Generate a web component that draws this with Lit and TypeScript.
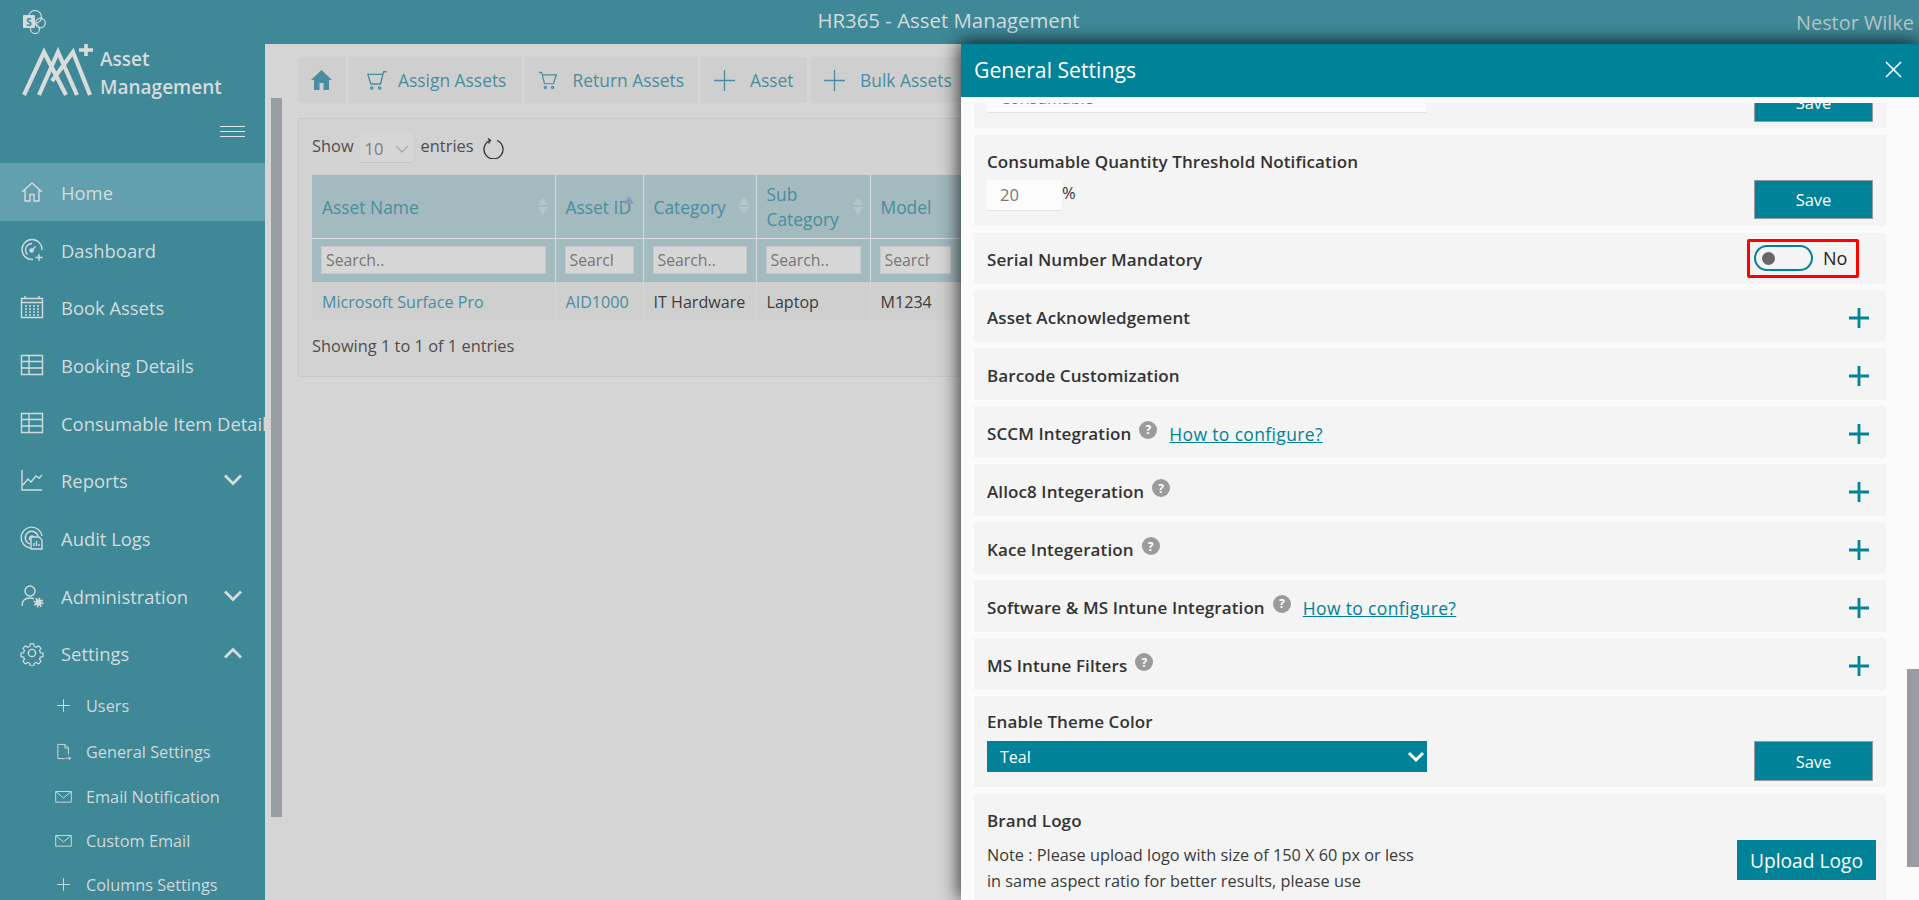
import { LitElement, html, css, svg } from "lit";
import { customElement } from "lit/decorators.js";

const ic = (body: unknown, size = 26, vb = 24) => html`<svg class="ic" width=${size} height=${size} viewBox="0 0 ${vb} ${vb}" fill="none" stroke="currentColor" stroke-width="1.4">${body}</svg>`;

const icons: Record<string, unknown> = {
  home: svg`<path d="M2 12 12 3l10 9M5 10v11h5v-6.5h4V21h5V10"/>`,
  dash: svg`<path d="M13 21.5A10 10 0 1 1 22 12M12 5.5A6.5 6.5 0 0 0 5.5 12c0 2 .8 3.5 2 4.6"/><circle cx="11.5" cy="12.5" r="1.6" fill="currentColor"/><path d="m12 12 3.5-3.5M19 16v7M15.5 19.5h7"/>`,
  cal: svg`<path d="M1.5 3.5h21v19h-21zM1.5 7.5h21M5 1v3M19 1v3"/><path stroke-dasharray="2 2" d="M5 11h14M5 14h14M5 17h14M5 20h14"/>`,
  grid: svg`<path d="M1.5 2.5h21v19h-21zM1.5 8.5h21M1.5 15h21M9 2.500v19"/>`,
  chart: svg`<path d="M2 2v20h20M3 17l5-6 3 3 5-6 3 2 3-3"/>`,
  audit: svg`<path d="M10 22A10.500 10.500 0 1 1 22 10M10 18A6.500 6.500 0 1 1 18 10M10 14a2.500 2.500 0 1 1 4-3"/><path fill="#3e8897" d="M11 11h8l3 3v9H11z"/><path d="M14 20v-3M16.500 20v-5M19 20v-2"/>`,
  admin: svg`<circle cx="10" cy="7" r="5"/><path d="M2 22c0-6 3-8 8-8 1.500 0 3 .3 4 .8"/><circle cx="18.500" cy="18.500" r="2.500" fill="currentColor"/><circle cx="18.500" cy="18.500" r="4" stroke-dasharray="1.600 1.500" stroke-width="2"/>`,
  gear: svg`<circle cx="12" cy="12" r="3.600"/><path d="M10 1.800h4l.6 3 2.300 1 2.600-1.700 2.800 2.900-1.700 2.500 1 2.400 3 .6v4l-3 .6-1 2.300 1.700 2.600-2.800 2.800-2.600-1.700-2.300 1-.6 3h-4l-.6-3-2.300-1-2.600 1.700-2.800-2.800 1.700-2.600-1-2.300-3-.6v-4l3-.6 1-2.400-1.700-2.500 2.800-2.900 2.600 1.700 2.300-1z" transform="translate(1.500 1.200) scale(.875)"/>`,
  plus: svg`<path d="M12 3v18M3 12h18"/>`,
  doc: svg`<path d="M4 22V2h10l5 5v9M14 2v5h5M4 22h10M15 21.500h7M19.500 19l2.500 2.500-2.500 2.500"/>`,
  mail: svg`<path d="M1 5h22v15H1zM1 5l11 9 11-9"/>`,
};

const nav = [
  ["home", "Home"], ["dash", "Dashboard"], ["cal", "Book Assets"], ["grid", "Booking Details"],
  ["grid", "Consumable Item Details"], ["chart", "Reports", "down"], ["audit", "Audit Logs"],
  ["admin", "Administration", "down"], ["gear", "Settings", "up"],
];
const sub = [["plus", "Users", 1], ["doc", "General Settings", 1], ["mail", "Email Notification", 0], ["mail", "Custom Email", 0], ["plus", "Columns Settings", 0]];

const cart = (flip: boolean) => html`<svg class=${flip ? "flip" : ""} width="22" height="21" viewBox="0 0 24 24" fill="none" stroke="#4a8d9e" stroke-width="1.500"><path d="M1 2h3.500L8 16h11l3.500-11H5.500"/><circle cx="9" cy="20.500" r="1.300"/><circle cx="18" cy="20.500" r="1.300"/></svg>`;
const tplus = html`<svg width="21" height="21" viewBox="0 0 21 21" stroke="#4a8d9e" stroke-width="1.300"><path d="M10.500 0v21M0 10.500h21"/></svg>`;

const help = html`<span class="help">?</span>`;
const chev = (up: boolean) => html`<svg class="chev" width="20" height="14" viewBox="0 0 20 14" fill="none" stroke="currentColor" stroke-width="2.800"><path d=${up ? "M2 11.500 10 3.500l8 8" : "M2 2.500l8 8 8-8"}/></svg>`;

const cols = [
  ["Asset Name", 243, "Microsoft Surface Pro", true],
  ["Asset ID", 88, "AID1000", true],
  ["Category", 113, "IT Hardware", false],
  ["Sub Category", 114, "Laptop", false],
  ["Model", 110, "M1234", false],
] as const;

@customElement("app-root")
export class AppRoot extends LitElement {
  static styles = css`
    :host { display: block; position: relative; width: 1919px; height: 900px; overflow: hidden; font-family: "Open Sans", "Noto Sans", sans-serif; background: #d5d5d5; color: #333; }
    * { box-sizing: border-box; }
    .top { height: 44px; background: #3e8897; display: flex; align-items: center; position: relative; color: #d3dcdd; }
    .top .sp { margin-left: 22px; flex: none; }
    .top .title { position: absolute; left: 0; width: 1897px; text-align: center; font-size: 20.400px; top: 6px; }
    .top .user { position: absolute; right: 5px; top: 9px; font-size: 19.900px; color: #b9c4c4; }
    .body { display: flex; height: 856px; }
    aside { width: 265px; flex: none; background: #3e8897; color: #d3dcdd; overflow: hidden; }
    .brand { height: 119px; padding: 0 20px 0 22px; display: flex; flex-direction: column; }
    .logo { display: flex; height: 60px; gap: 6px; align-items: flex-start; }
    .logo .nm { font-size: 19px; font-weight: 600; line-height: 28px; color: #d6dcdc; padding-top: 1px; white-space: nowrap; }
    .burger { align-self: flex-end; width: 25px; height: 11px; margin-top: 22px; border-top: 1px solid #dfe5e6; border-bottom: 1px solid #dfe5e6; display: flex; align-items: center; }
    .burger i { display: block; width: 100%; height: 1px; background: #dfe5e6; }
    .item { height: 57.700px; display: flex; align-items: center; padding: 0 22px 0 20px; font-size: 18.400px; white-space: nowrap; }
    .item.on { background: #62a0af; }
    .item .ic { flex: none; width: 24px; margin-right: 17px; }
    .item .lbl { flex: 1; padding-top: 1px; }
    .chev { flex: none; }
    .sub { height: 44px; display: flex; align-items: center; padding-left: 55px; font-size: 16.300px; white-space: nowrap; color: #cfd9da; }
    .sub.tall { height: 46px; }
    .sub .ic { width: 17px; height: 17px; margin-right: 14px; flex: none; }
    .sub span { padding-top: 2px; }
    main { flex: 1; min-width: 0; position: relative; padding: 13px 0 0 33px; overflow: hidden; }
    .vbar { position: absolute; left: 6px; top: 54px; width: 11px; height: 719px; background: #979da3; }
    .tabs { display: flex; gap: 4px; height: 46px; }
    .tab { display: flex; align-items: center; gap: 15px; background: #cfcfcf; color: #4a8d9e; font-size: 17.400px; height: 46px; padding: 0 13px; white-space: nowrap; flex: none; }
    .tab.t0 { width: 47px; justify-content: center; padding: 0; }
    .tab.t1 { width: 172px; }
    .tab.t2 { width: 172px; padding-left: 17px; gap: 10px; }
    .tab.t3 { width: 106px; }
    .flip { transform: scaleX(-1); }
    .card { margin-top: 15px; width: 1200px; height: 259px; border: 1px solid #c8c8c8; background: #d2d2d2; padding: 14px 13px; font-size: 16.400px; color: #4e4e4e; }
    .show { display: flex; align-items: flex-start; height: 31px; line-height: 26px; }
    .sel { width: 53px; height: 30px; margin: 0 8px 0 6px; background: #d6d6d6; border-bottom: 1px solid #c6c6c6; display: flex; align-items: center; justify-content: space-between; padding: 3px 4px 0 5px; color: #7d7d7d; font-size: 16.500px; }
    .refresh { margin: 4px 0 0 9px; }
    table { border-collapse: collapse; table-layout: fixed; width: 668px; margin-top: 11px; font-size: 16.100px; }
    th { background: #a3babe; color: #4a8d9e; font-weight: 400; font-size: 17.400px; text-align: left; height: 63px; padding: 2px 10px 0; line-height: 25px; position: relative; border-right: 1px solid #d4dcdd; border-bottom: 1px solid #d4dcdd; }
    th .txt { display: block; }
    .sort { position: absolute; right: 7px; top: 22px; width: 10px; height: 20px; display: flex; flex-direction: column; gap: 2px; }
    .sort i { width: 0; height: 0; border-left: 5px solid transparent; border-right: 5px solid transparent; }
    .sort i:first-child { border-bottom: 8px solid #b7c5c9; }
    .sort i:last-child { border-top: 8px solid #b7c5c9; }
    .sort.act i:first-child { border-bottom-color: #8b9cc4; }
    .sort.act { right: 9px; top: 21px; }
    .sort.act i:last-child { opacity: 0; }
    .flt td { background: #a3babe; height: 44px; padding: 0 9px; border-right: 1px solid #d4dcdd; }
    .flt input { width: 100%; height: 28px; border: 1px solid #c6c9c9; background: #d6d6d6; font: 15.800px "Open Sans", sans-serif; color: #757575; padding: 0 20px 0 4px; display: block; }
    .flt td:last-child input { width: 71px; }
    .flt input::placeholder { color: #767676; opacity: 1; }
    .row td { background: #cfcfcf; height: 37px; padding: 2px 10px 0; border-right: 1px solid #d6d6d6; white-space: nowrap; overflow: hidden; color: #3d3d3d; }
    .row td.ln { color: #4a8d9e; }
    .foot { margin-top: 15px; }
    .panel { position: absolute; left: 961px; top: 44px; right: 0; height: 856px; background: #fbfbfb; box-shadow: -4px 0 18px rgba(0,0,0,.45), 0 -4px 14px rgba(0,0,0,.4); }
    .phead { height: 53px; background: #008299; color: #fff; display: flex; align-items: center; justify-content: space-between; padding: 0 17px 3px 13px; font-size: 21.200px; }
    .pbody { margin-top: 6px; padding: 0 33px 0 13px; display: flex; flex-direction: column; }
    .pbar { position: absolute; right: 0; top: 625px; width: 12px; height: 198px; background: #979da3; }
    .r { background: #f4f4f4; padding: 0 13px; font-size: 17px; font-weight: 600; letter-spacing: .1px; color: #333; display: flex; align-items: center; justify-content: space-between; margin-bottom: 6px; flex: none; white-space: nowrap; }
    .r.std { height: 52px; }
    .r.ser { height: 51px; }
    .r.ser .lft { padding-top: 2px; }
    .r.clip { height: 25px; overflow: hidden; align-items: flex-start; margin-bottom: 7px; }
    .r .lft { display: flex; align-items: flex-start; padding-top: 3px; }
    .btn { width: 119px; height: 39px; background: #008299; color: #fff; border: 1px solid #9a9a9a; display: flex; align-items: center; justify-content: center; font-size: 16.500px; font-weight: 400; letter-spacing: 0; flex: none; }
    .ghost { width: 439px; height: 41px; margin-top: -31px; background: #fcfcfc; border-bottom: 1px solid #e2e2e2; padding: 15px 13px 0; font-weight: 400; color: #777; font-size: 16px; letter-spacing: 0; }
    .clip .btn { margin: -20px 0 0 0; }
    .tog { display: flex; align-items: center; width: 112px; height: 39px; border: 3px solid #f00; border-radius: 2px; padding-left: 4px; margin: -1px 14px 0 0; font-weight: 400; font-size: 18px; letter-spacing: 0; color: #222; }
    .track { width: 59px; height: 26px; border: 2px solid #008299; border-radius: 13px; display: flex; align-items: center; padding-left: 6px; margin-right: 10px; flex: none; }
    .knob { width: 13px; height: 13px; border-radius: 50%; background: #666; }
    .rplus { margin: 3px 4px 0 0; flex: none; }
    .help { width: 18px; height: 18px; border-radius: 50%; background: #9b9b9b; color: #fff; font-size: 12px; font-weight: 700; letter-spacing: 0; display: flex; align-items: center; justify-content: center; margin: -1px 0 0 8px; flex: none; }
    a { color: #008299; text-decoration: underline; font-weight: 500; font-size: 17.500px; letter-spacing: .35px; margin-left: 12px; }
    .tall2 { height: 91px; align-items: flex-start; padding-top: 15px; margin-bottom: 7px; }
    .tall2 .btn { margin-top: 30px; }
    .pct { display: flex; margin-top: 7px; font-weight: 400; letter-spacing: 0; }
    .num { width: 75px; height: 31px; background: #fcfcfc; border-bottom: 1px solid #e2e2e2; color: #777; padding: 3px 13px; font-size: 16.500px; }
    .pct span { font-size: 16.500px; line-height: 26px; }
    .theme { height: 91px; align-items: flex-start; padding-top: 14px; margin-bottom: 7px; }
    .theme .btn { margin-top: 31px; height: 40px; }
    .tsel { width: 440px; height: 31px; margin-top: 8px; background: #008299; color: #fff; font-weight: 400; font-size: 16px; letter-spacing: 0; display: flex; align-items: center; justify-content: space-between; padding: 0 2px 0 13px; }
    .logo-row { height: 106px; align-items: flex-start; padding-top: 15px; margin: 0; overflow: hidden; }
    .note { font-weight: 400; font-size: 16.300px; letter-spacing: 0; line-height: 26px; margin-top: 10px; width: 440px; color: #3a3a3a; }
    .upload { width: 139px; height: 40px; background: #008299; color: #fff; font-size: 19.200px; font-weight: 400; letter-spacing: 0; display: flex; align-items: center; justify-content: center; margin: 31px -3px 0 0; flex: none; }
  `;

  private rowPlus() {
    return html`<svg class="rplus" width="20" height="20" viewBox="0 0 20 20" stroke="#008299" stroke-width="2.800"><path d="M10 0v20M0 10h20"/></svg>`;
  }

  private simple(title: unknown) {
    return html`<div class="r std"><div class="lft">${title}</div>${this.rowPlus()}</div>`;
  }

  render() {
    return html`
      <div class="top">
        <svg class="sp" width="24" height="24" viewBox="0 0 24 24"><circle cx="13" cy="7" r="6.500" fill="none" stroke="#d3dcdd" stroke-width="1.200"/><circle cx="18.500" cy="13" r="4.800" fill="none" stroke="#d3dcdd" stroke-width="1.200"/><circle cx="13" cy="19" r="4.500" fill="none" stroke="#d3dcdd" stroke-width="1.200"/><rect x="1" y="5" width="12" height="13" rx="1" fill="#d3dcdd"/><text x="7" y="15.500" text-anchor="middle" font-size="10" font-weight="700" font-family="Open Sans" fill="#3e8897">S</text></svg>
        <div class="title">HR365 - Asset Management</div>
        <div class="user">Nestor Wilke</div>
      </div>
      <div class="body">
        <aside>
          <div class="brand">
            <div class="logo">
              <svg width="72" height="54" viewBox="0 0 72 54" fill="none" stroke="#d9dcdc" stroke-width="4.200" style="flex:none"><path d="M2 51 22 8l22 43M17 51 36 8l19 43M30 37 51 8l17 43"/><path d="M64 0v12M57 6h14" stroke-width="3.600"/></svg>
              <div class="nm">Asset<br />Management</div>
            </div>
            <div class="burger"><i></i></div>
          </div>
          ${nav.map((n, i) => html`<div class="item ${i === 0 ? "on" : ""}">${ic(icons[n[0]])}<span class="lbl">${n[1]}</span>${n[2] ? chev(n[2] === "up") : ""}</div>`)}
          ${sub.map((s) => html`<div class="sub ${s[2] ? "tall" : ""}">${ic(icons[s[0] as string], 17)}<span>${s[1]}</span></div>`)}
        </aside>
        <main>
          <div class="vbar"></div>
          <div class="tabs">
            <div class="tab t0"><svg width="21" height="20" viewBox="0 0 21 20" fill="#4a8d9e"><path d="M10.500 0 0 10h3v10h5.500v-7h4v7H18V10h3z"/></svg></div>
            <div class="tab t2">${cart(true)}Assign Assets</div>
            <div class="tab t1">${cart(false)}Return Assets</div>
            <div class="tab t3">${tplus}Asset</div>
            <div class="tab">${tplus}Bulk Assets</div>
          </div>
          <div class="card">
            <div class="show">Show
              <div class="sel">10<svg width="14" height="8" viewBox="0 0 14 8" fill="none" stroke="#a9a9a9" stroke-width="1.300"><path d="m1 1 6 6 6-6"/></svg></div>
              entries
              <svg class="refresh" width="22" height="22" viewBox="0 0 22 22" fill="none" stroke="#333" stroke-width="1.300"><path d="M7 3.500a9.500 9.500 0 1 0 7 0M5 1.500 7.500 3.500 5.500 6.500" /></svg>
            </div>
            <table>
              <colgroup>${cols.map((c) => html`<col style="width:${c[1]}px" />`)}</colgroup>
              <tr>${cols.map((c, i) => html`<th><span class="txt" style=${c[0] === "Sub Category" ? "width:60px" : ""}>${c[0]}</span><span class="sort ${i === 1 ? "act" : ""}"><i></i><i></i></span></th>`)}</tr>
              <tr class="flt">${cols.map(() => html`<td><input placeholder="Search.." /></td>`)}</tr>
              <tr class="row">${cols.map((c) => html`<td class=${c[3] ? "ln" : ""}>${c[2]}</td>`)}</tr>
            </table>
            <div class="foot">Showing 1 to 1 of 1 entries</div>
          </div>
        </main>
      </div>
      <section class="panel">
        <div class="phead">General Settings
          <svg width="17" height="17" viewBox="0 0 17 17" stroke="#fff" stroke-width="1.600"><path d="m1 1 15 15M16 1 1 16"/></svg>
        </div>
        <div class="pbody">
          <div class="r clip"><div class="ghost">Consumable</div><div class="btn">Save</div></div>
          <div class="r tall2">
            <div>Consumable Quantity Threshold Notification
              <div class="pct"><div class="num">20</div><span>%</span></div>
            </div>
            <div class="btn">Save</div>
          </div>
          <div class="r ser"><div class="lft">Serial Number Mandatory</div>
            <div class="tog"><div class="track"><div class="knob"></div></div>No</div>
          </div>
          ${this.simple("Asset Acknowledgement")}
          ${this.simple("Barcode Customization")}
          ${this.simple(html`SCCM Integration ${help}<a>How to configure?</a>`)}
          ${this.simple(html`Alloc8 Integeration ${help}`)}
          ${this.simple(html`Kace Integeration ${help}`)}
          ${this.simple(html`Software &amp; MS Intune Integration ${help}<a>How to configure?</a>`)}
          ${this.simple(html`MS Intune Filters ${help}`)}
          <div class="r theme">
            <div>Enable Theme Color
              <div class="tsel">Teal<svg width="18" height="12" viewBox="0 0 18 12" fill="none" stroke="#fff" stroke-width="3"><path d="m2 2 7 7 7-7"/></svg></div>
            </div>
            <div class="btn">Save</div>
          </div>
          <div class="r logo-row">
            <div>Brand Logo
              <div class="note">Note : Please upload logo with size of 150 X 60 px or less<br />in same aspect ratio for better results, please use</div>
            </div>
            <div class="upload">Upload Logo</div>
          </div>
        </div>
        <div class="pbar"></div>
      </section>
    `;
  }
}
